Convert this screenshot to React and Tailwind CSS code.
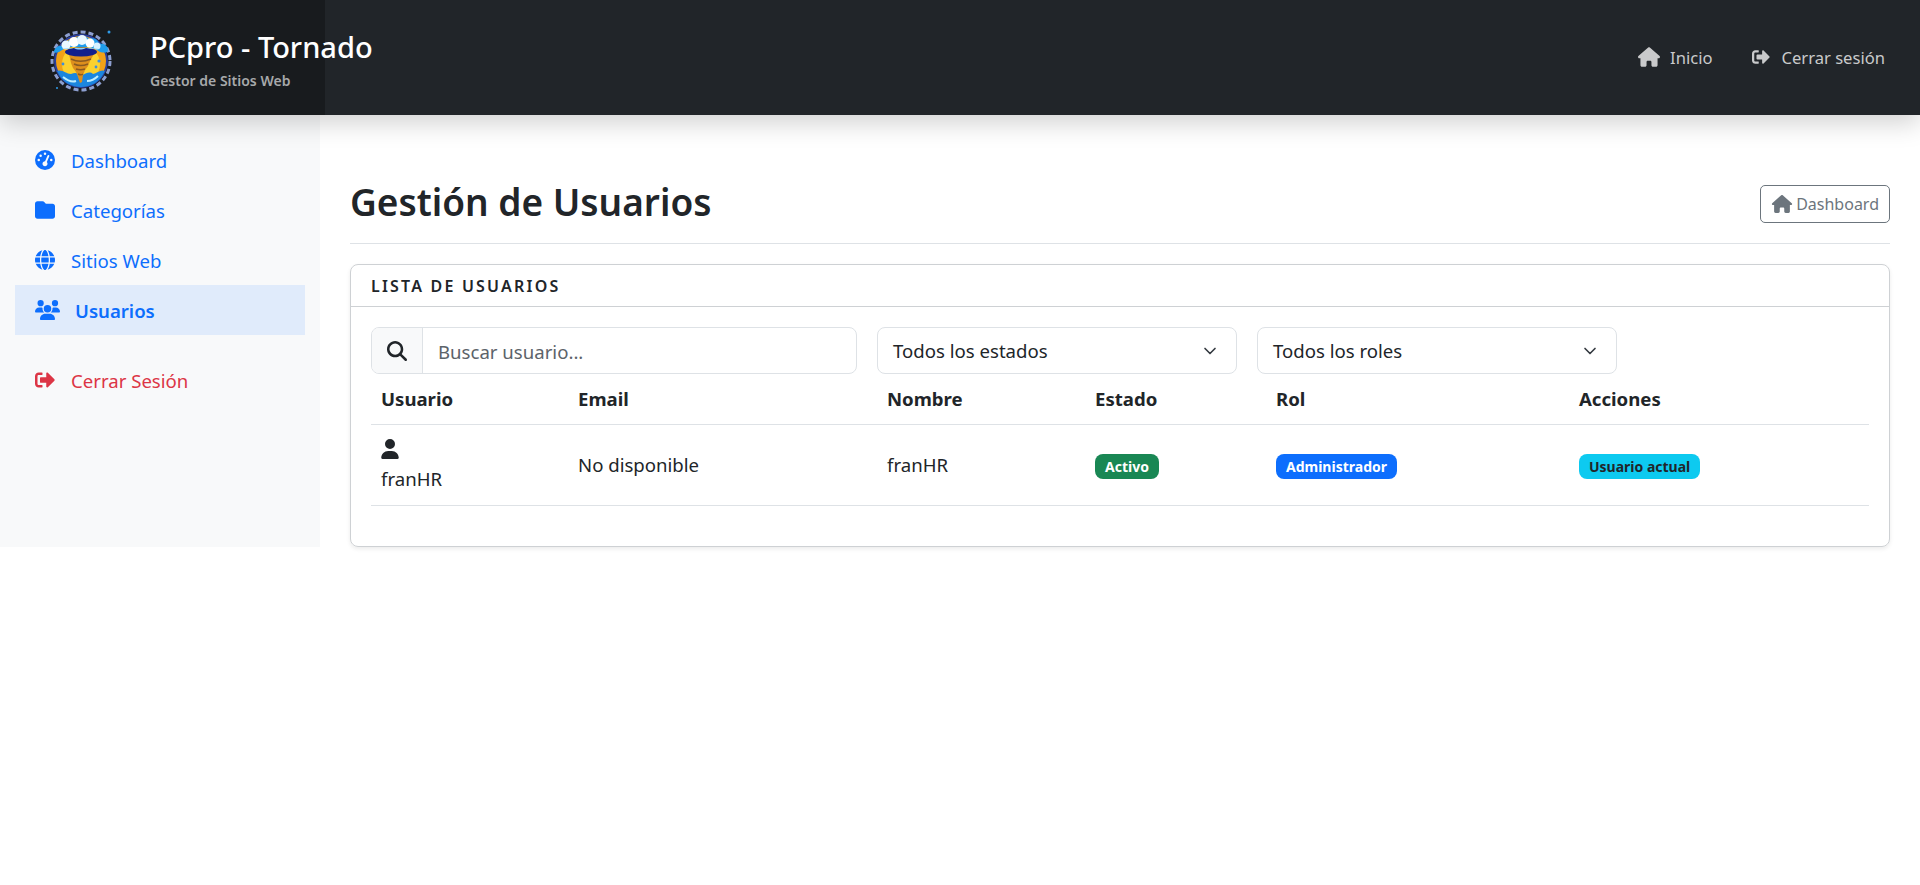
import React from 'react';
import { FaSignOutAlt } from 'react-icons/fa';
import {
    FaGaugeHigh,
    FaFolder,
    FaGlobe,
    FaUsers,
    FaHouse,
    FaUser,
    FaMagnifyingGlass,
} from 'react-icons/fa6';
import { LuChevronDown } from 'react-icons/lu';

const Logo = () => (
    <svg viewBox="0 0 64 64" className="w-[64px] h-[64px] shrink-0 mt-[4px]">
        {/* ring with little bumps */}
        <circle cx="32" cy="33" r="29" fill="none" stroke="#8d9fd0" strokeWidth="3" strokeDasharray="5 3" />
        <circle cx="32" cy="33" r="27" fill="#2a3f9e" />
        <circle cx="32" cy="33" r="25" fill="#f3a116" />
        <circle cx="32" cy="36" r="19" fill="#fbd12e" />
        {/* water */}
        <path d="M8 43c5 11 14 16 24 16s19-5 24-16c-4-2-8 2-12 3-3-3-7-1-10 1-5-2-8-3-12-1-5 0-9-5-14-3z" fill="#1b86df" />
        <path d="M14 49c5 4 10 5 13 4M38 53c4 0 8-2 11-5" stroke="#bfeeff" strokeWidth="2" fill="none" />
        {/* funnel */}
        <path d="M20 26h25l-4 7-2 5-3 4-2 5-1 7-2 1-2-6-2-5-3-4-2-5z" fill="#dd8f1d" />
        <path d="M22 31c6 3 13 3 20 0M25 36c4 2 9 2 14 0M27 41c3 1 6 1 9 0M29 46c2 1 4 1 5 0" stroke="#8a5a20" strokeWidth="1.5" fill="none" />
        <ellipse cx="32" cy="24" rx="16" ry="4.5" fill="#111f8c" />
        {/* cloud */}
        <path d="M5 23c1-4 5-6 9-5 2-5 7-7 11-6 3-5 12-5 15-1 4-2 9 0 10 5 5-1 9 2 9 6 0 3-4 3-8 2-4-3-8-5-14-5H26c-7 0-12 2-16 5-3 1-6 1-5-1z" fill="#1f9cec" />
        <circle cx="17" cy="17" r="4.5" fill="#eaf8ff" />
        <circle cx="25" cy="14" r="5" fill="#ffffff" />
        <circle cx="33" cy="12" r="5" fill="#eaf8ff" />
        <circle cx="41" cy="15" r="4.5" fill="#ffffff" />
        <circle cx="48" cy="18" r="3.5" fill="#d5f0ff" />
        <path d="M12 20h38c-5 1-10 1-13 0-4 2-9 2-12 0-4 1-9 1-13 0z" fill="#8fd4f7" />
        {/* droplets */}
        <circle cx="50" cy="33" r="1.6" fill="#3b8fe0" />
        <circle cx="14" cy="36" r="1.4" fill="#3b8fe0" />
        <circle cx="47" cy="39" r="1.4" fill="#3b8fe0" />
        <circle cx="60" cy="4" r="1.5" fill="#2f9be8" />
        <circle cx="8" cy="60" r="1" fill="#2f9be8" />
    </svg>
);

const SideLink = ({ icon: Icon, label, active, color = 'text-[#0d6efd]' }) => (
    <a href="#" className={`flex items-center h-[50px] pl-[20px] ${color} ${active ? 'bg-[#e0ebfb] font-semibold' : ''}`}>
        <Icon className={active ? 'w-[25px] h-[20px] mr-[15px]' : 'w-[20px] h-[20px] mr-[16px]'} />
        <span className="mt-[1px]">{label}</span>
    </a>
);

const Select = ({ label }) => (
    <div className="flex items-center justify-between w-[360px] h-[47px] pl-[15px] pr-[16px] border border-[#dee2e6] rounded-[8px] text-[#212529] bg-white">
        <span className="mt-[1px]">{label}</span>
        <LuChevronDown className="w-[20px] h-[20px] text-[#343a40]" />
    </div>
);

const Badge = ({ className, children }) => (
    <span className={`inline-block px-[10px] py-[5px] rounded-[8px] text-[14px] leading-[15px] font-bold ${className}`}>
        {children}
    </span>
);

export default function App() {
    return (
        <div className="min-h-screen bg-white text-[18.6px] text-[#212529] font-['Noto_Sans','Open_Sans',sans-serif]">
            {/* Header */}
            <header className="relative z-10 flex items-stretch justify-between h-[115px] bg-[#212529] shadow-[0_8px_24px_rgba(0,0,0,0.18)]">
                <div className="flex items-center w-[325px] bg-black/25 pl-[49px]">
                    <Logo />
                    <div className="ml-[37px] mt-[5px] whitespace-nowrap">
                        <div className="text-[29px] leading-[34px] font-medium text-white">PCpro - Tornado</div>
                        <div className="mt-[7px] text-[14px] leading-[20px] font-semibold text-[#a7a9ab]">Gestor de Sitios Web</div>
                    </div>
                </div>
                <nav className="flex items-center gap-[39px] pr-[35px] text-[16.6px] text-[#c9cacb]">
                    <a href="#" className="flex items-center gap-[10px]"><FaHouse className="w-[22px] h-[20px]" /><span className="mt-[1px]">Inicio</span></a>
                    <a href="#" className="flex items-center gap-[10px]"><FaSignOutAlt className="w-[20px] h-[18px]" /><span className="mt-[1px]">Cerrar sesión</span></a>
                </nav>
            </header>

            <div className="flex">
                {/* Sidebar */}
                <aside className="w-[320px] bg-[#f8f9fa] pt-[20px] px-[15px]">
                    <SideLink icon={FaGaugeHigh} label="Dashboard" />
                    <SideLink icon={FaFolder} label="Categorías" />
                    <SideLink icon={FaGlobe} label="Sitios Web" />
                    <SideLink icon={FaUsers} label="Usuarios" active />
                    <div className="mt-[20px]">
                        <SideLink icon={FaSignOutAlt} label="Cerrar Sesión" color="text-[#dc3545]" />
                    </div>
                </aside>

                {/* Main */}
                <main className="flex-1 px-[30px]">
                    <div className="flex items-center justify-between h-[129px] pt-[50px] border-b border-[#dee2e6]">
                        <h1 className="text-[37px] leading-[48px] font-semibold -mt-[5px]">Gestión de Usuarios</h1>
                        <a href="#" className="flex items-center gap-[3px] h-[38px] px-[10px] border border-[#6c757d] rounded-[5px] text-[16px] text-[#6c757d]">
                            <FaHouse className="w-[22px] h-[18px]" />Dashboard
                        </a>
                    </div>

                    <section className="mt-[20px] border border-[#ced1d4] rounded-[8px] shadow-[0_2px_4px_rgba(0,0,0,0.08)]">
                        <div className="flex items-center h-[42px] px-[20px] border-b border-[#ced1d4] text-[16px] font-semibold tracking-[2.2px] uppercase">
                            Lista de Usuarios
                        </div>
                        <div className="p-[20px]">
                            <div className="flex gap-[20px]">
                                <div className="flex w-[486px] h-[47px] border border-[#dee2e6] rounded-[8px] overflow-hidden">
                                    <span className="flex items-center justify-center w-[51px] bg-[#f8f9fa] border-r border-[#dee2e6]">
                                        <FaMagnifyingGlass className="w-[20px] h-[20px]" />
                                    </span>
                                    <input placeholder="Buscar usuario..." className="flex-1 pl-[15px] pt-[2px] outline-none placeholder:text-[#5c636a]" />
                                </div>
                                <Select label="Todos los estados" />
                                <Select label="Todos los roles" />
                            </div>

                            <table className="w-full table-fixed border-collapse mb-[20px] text-left">
                                <thead>
                                    <tr className="h-[50px] border-b border-[#dee2e6]">
                                        <th className="w-[197px] pl-[10px] font-bold">Usuario</th>
                                        <th className="w-[309px] pl-[10px] font-bold">Email</th>
                                        <th className="w-[208px] pl-[10px] font-bold">Nombre</th>
                                        <th className="w-[181px] pl-[10px] font-bold">Estado</th>
                                        <th className="w-[303px] pl-[10px] font-bold">Rol</th>
                                        <th className="pl-[10px] font-bold">Acciones</th>
                                    </tr>
                                </thead>
                                <tbody>
                                    <tr className="h-[81px] border-b border-[#dee2e6]">
                                        <td className="pl-[10px] pt-[2px]">
                                            <FaUser className="w-[18px] h-[20px] mb-[6px]" />
                                            franHR
                                        </td>
                                        <td className="pl-[10px] pt-[1px]">No disponible</td>
                                        <td className="pl-[10px] pt-[1px]">franHR</td>
                                        <td className="pl-[10px] pt-[1px]"><Badge className="bg-[#198754] text-white">Activo</Badge></td>
                                        <td className="pl-[10px] pt-[1px]"><Badge className="bg-[#0d6efd] text-white">Administrador</Badge></td>
                                        <td className="pl-[10px] pt-[1px]"><Badge className="bg-[#0dcaf0] text-[#212529]">Usuario actual</Badge></td>
                                    </tr>
                                </tbody>
                            </table>
                        </div>
                    </section>
                </main>
            </div>
        </div>
    );
}
